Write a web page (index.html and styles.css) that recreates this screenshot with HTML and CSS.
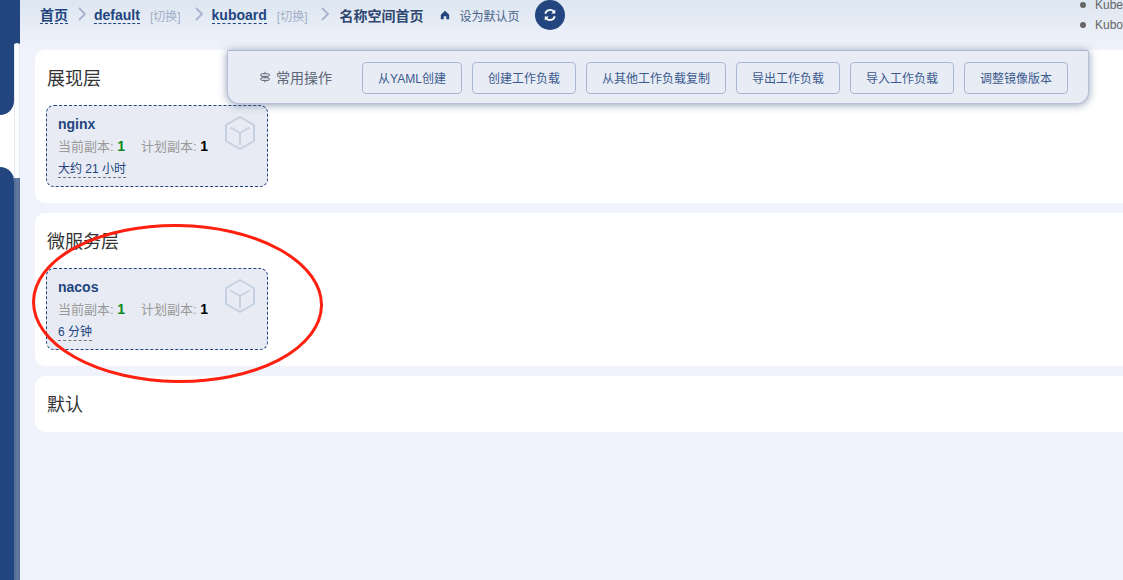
FILE: index.html
```html
<!DOCTYPE html>
<html lang="zh">
<head>
<meta charset="utf-8">
<title>名称空间首页</title>
<link rel="stylesheet" href="styles.css">
</head>
<body>
<div class="page">
  <aside class="sidebar">
    <div class="side-main">
      <div class="side-block side-top"></div>
      <div class="side-block side-bottom"></div>
    </div>
    <div class="side-rail">
      <div class="rail-top"></div>
      <div class="rail-thumb"></div>
      <div class="rail-bottom"></div>
    </div>
  </aside>
  <main class="main">
    <header class="header">
      <nav class="crumbs">
        <a class="crumb">首页</a>
        <svg class="chev chev-first" viewBox="0 0 8 14"><path d="M1 1l6 6-6 6"/></svg>
        <a class="crumb">default</a>
        <span class="switch">[切换]</span>
        <svg class="chev" viewBox="0 0 8 14"><path d="M1 1l6 6-6 6"/></svg>
        <a class="crumb">kuboard</a>
        <span class="switch">[切换]</span>
        <svg class="chev" viewBox="0 0 8 14"><path d="M1 1l6 6-6 6"/></svg>
        <span class="current">名称空间首页</span>
        <span class="default-link">
          <svg class="home" viewBox="0 0 12 12"><path d="M6 1L1 5.6V11h3.4V7.6h3.2V11H11V5.6z"/></svg>
          设为默认页
        </span>
        <span class="refresh">
          <svg viewBox="0 0 16 16"><path d="M2.6 6.6A5.6 5.6 0 0 1 12.4 4.2"/><path d="M13.4 9.4A5.6 5.6 0 0 1 3.6 11.8"/><path class="fill" d="M14 1.6v4.6H9.4z"/><path class="fill" d="M2 14.4V9.8h4.6z"/></svg>
        </span>
      </nav>
      <ul class="links">
        <li>Kube</li>
        <li>Kubo</li>
      </ul>
    </header>

    <section class="panel">
      <h2 class="panel-title">展现层</h2>
      <div class="workloads">
        <article class="workload">
          <div class="wl-name">nginx</div>
          <div class="wl-replicas"><span class="label">当前副本:</span> <b class="cur">1</b><span class="label planned">计划副本:</span> <b class="plan">1</b></div>
          <div class="wl-age"><span class="age">大约 21 小时</span></div>
          <svg class="cube" viewBox="0 0 30 34"><path d="M15 1L29 9v16l-14 8-14-8V9z"/><path d="M5.5 11.5L15 17l9.500-5.500M15 17v12"/></svg>
        </article>
      </div>
    </section>

    <section class="panel">
      <h2 class="panel-title">微服务层</h2>
      <div class="workloads">
        <article class="workload">
          <div class="wl-name">nacos</div>
          <div class="wl-replicas"><span class="label">当前副本:</span> <b class="cur">1</b><span class="label planned">计划副本:</span> <b class="plan">1</b></div>
          <div class="wl-age"><span class="age">6 分钟</span></div>
          <svg class="cube" viewBox="0 0 30 34"><path d="M15 1L29 9v16l-14 8-14-8V9z"/><path d="M5.5 11.5L15 17l9.500-5.500M15 17v12"/></svg>
        </article>
      </div>
    </section>

    <section class="panel panel-empty">
      <h2 class="panel-title">默认</h2>
    </section>
  </main>

  <div class="actions">
    <span class="actions-label">
      <svg class="ops" viewBox="0 0 12 12"><path d="M6 .8v2M3 2.800h6l1.800 1.300L9 5.400H3a1.300 1.300 0 0 1 0-2.600z"/><path d="M6 5.400v1.400M9 6.800H3L1.200 8.100 3 9.400h6a1.300 1.300 0 0 0 0-2.600zM6 9.400v2"/></svg>
      常用操作
    </span>
    <div class="actions-buttons">
      <button class="btn btn-yaml">从YAML创建</button>
      <button class="btn btn-six">创建工作负载</button>
      <button class="btn btn-copy">从其他工作负载复制</button>
      <button class="btn btn-six">导出工作负载</button>
      <button class="btn btn-six">导入工作负载</button>
      <button class="btn btn-six">调整镜像版本</button>
    </div>
  </div>

  <svg class="annotation" viewBox="0 0 289 157"><ellipse cx="144.500" cy="78.500" rx="144" ry="78" transform="rotate(0.8 144.500 78.500)"/></svg>
</div>
</body>
</html>
```
FILE: styles.css
```css
* { box-sizing: border-box; }
html, body { margin: 0; height: 100%; overflow: hidden; }
body {
  background: #f0f3fb;
  font-family: "Liberation Sans", "Noto Sans CJK SC", sans-serif;
  color: #333;
}
.page { position: relative; display: flex; width: 1123px; height: 580px; overflow: hidden; }

.sidebar { display: flex; flex: 0 0 20px; height: 580px; background: #fff; }
.side-main { display: flex; flex-direction: column; justify-content: space-between; width: 14px; }
.side-block { background: #22457f; }
.side-top { height: 115px; border-bottom-right-radius: 14px; }
.side-bottom { height: 413px; border-top-right-radius: 14px; }
.side-rail { display: flex; flex-direction: column; width: 6px; }
.rail-top { flex: 0 0 44px; background: #22457f; }
.rail-thumb { flex: 0 0 135px; background: #fff; border: 1px solid #e6e8ee; border-bottom: 0; border-radius: 3px 3px 0 0; margin-top: -1px; }
.rail-bottom { flex: 1; background: linear-gradient(90deg, #4f6a96, #647b9f 50%, #566f99); }

.main { flex: 1; min-width: 0; }
.header {
  display: flex;
  justify-content: space-between;
  height: 50px;
  background: linear-gradient(180deg, #dde6f1, #f0f3fb);
}
.crumbs { display: flex; align-items: center; height: 30px; padding-left: 20px; font-size: 14px; }
.crumb {
  color: #22457f;
  font-weight: 700;
  line-height: 16px;
  border-bottom: 1px dashed #22457f;
  margin-top: 1px;
}
.chev { width: 8px; height: 14px; margin: -2px 9px 0 10px; fill: none; stroke: #a6b4ce; stroke-width: 1.8; }
.chev-first { margin-right: 8px; }
.switch { color: #a3afc8; font-size: 12px; margin-left: 10px; margin-right: 4px; }
.current { color: #2f4670; font-weight: 700; margin-left: 1px; }
.default-link { display: flex; align-items: center; color: #4a6288; font-size: 12px; margin-left: 17px; }
.home { width: 10px; height: 10px; margin-right: 9px; fill: #22457f; }
.refresh {
  display: flex;
  align-items: center;
  justify-content: center;
  width: 30px;
  height: 30px;
  margin-left: 16px;
  border-radius: 50%;
  background: #22457f;
}
.refresh svg { width: 14px; height: 14px; fill: none; stroke: #fff; stroke-width: 2; }
.refresh .fill { fill: #fff; stroke: none; }
.links {
  list-style: none;
  margin: -5px 0 0;
  padding: 0;
  flex: 0 0 42px;
  white-space: nowrap;
  font-size: 12px;
  line-height: 20px;
  color: #666;
}
.links li { position: relative; padding-left: 15px; }
.links li::before {
  content: "";
  position: absolute;
  left: 0;
  top: 7px;
  width: 6px;
  height: 6px;
  border-radius: 50%;
  background: #666;
}

.panel {
  width: 1120px;
  margin: 0 0 10px 15px;
  padding: 17px 11px 14px;
  background: #fff;
  border-radius: 10px;
}
.panel-empty { padding-bottom: 13px; }
.panel-title { margin: 0; padding-left: 1px; font-size: 18px; font-weight: 400; line-height: 25px; color: #333; }
.workloads { padding: 13px 0 2px; }
.panel-empty .panel-title { padding-bottom: 1px; }
.workload {
  position: relative;
  width: 222px;
  height: 82px;
  padding: 9px 11px;
  background: #e8ebf3;
  border: 1px dashed #22457f;
  border-radius: 8px;
}
.wl-name { font-size: 14px; font-weight: 700; line-height: 18px; color: #22457f; }
.wl-replicas { margin-top: 3px; font-size: 13px; line-height: 20px; color: #999; white-space: nowrap; }
.wl-replicas b { font-size: 14px; }
.cur { color: #0a8a1e; }
.plan { color: #000; }
.planned { margin-left: 16px; }
.wl-age { margin-top: 4px; font-size: 12px; line-height: 16px; color: #22457f; }
.age { display: inline-block; border-bottom: 1px dashed #777; }
.cube {
  position: absolute;
  right: 12px;
  top: 10px;
  width: 30px;
  height: 34px;
  fill: none;
  stroke: #c5d0e0;
  stroke-width: 2;
  stroke-linejoin: round;
}

.actions {
  position: absolute;
  left: 227px;
  top: 50px;
  display: flex;
  align-items: center;
  width: 862px;
  height: 54px;
  padding: 2px 0 0 31px;
  background: #e8ecf4;
  border: 1px solid #b4c0d6;
  border-top-color: #aab7cf;
  border-radius: 2px 2px 12px 12px;
  box-shadow: 0 1px 8px rgba(50, 75, 120, .55);
}
.actions-label {
  display: flex;
  align-items: center;
  width: 103px;
  flex: none;
  margin-top: -2px;
  font-size: 14px;
  color: #5b6677;
}
.ops { width: 12px; height: 12px; margin-right: 5px; fill: none; stroke: #5b6677; stroke-width: 1; }
.actions-buttons { display: flex; gap: 10px; }
.btn {
  height: 32px;
  padding: 0 0 2px;
  background: #e8ecf4;
  border: 1px solid #a9b8d2;
  border-radius: 4px;
  font-family: inherit;
  font-size: 12px;
  color: #3b5a8f;
}
.btn-yaml { width: 100px; }
.btn-six { width: 104px; }
.btn-copy { width: 140px; }

.annotation {
  position: absolute;
  left: 33px;
  top: 225px;
  width: 289px;
  height: 157px;
  fill: none;
  stroke: #ff2010;
  stroke-width: 3;
  overflow: visible;
}
```
